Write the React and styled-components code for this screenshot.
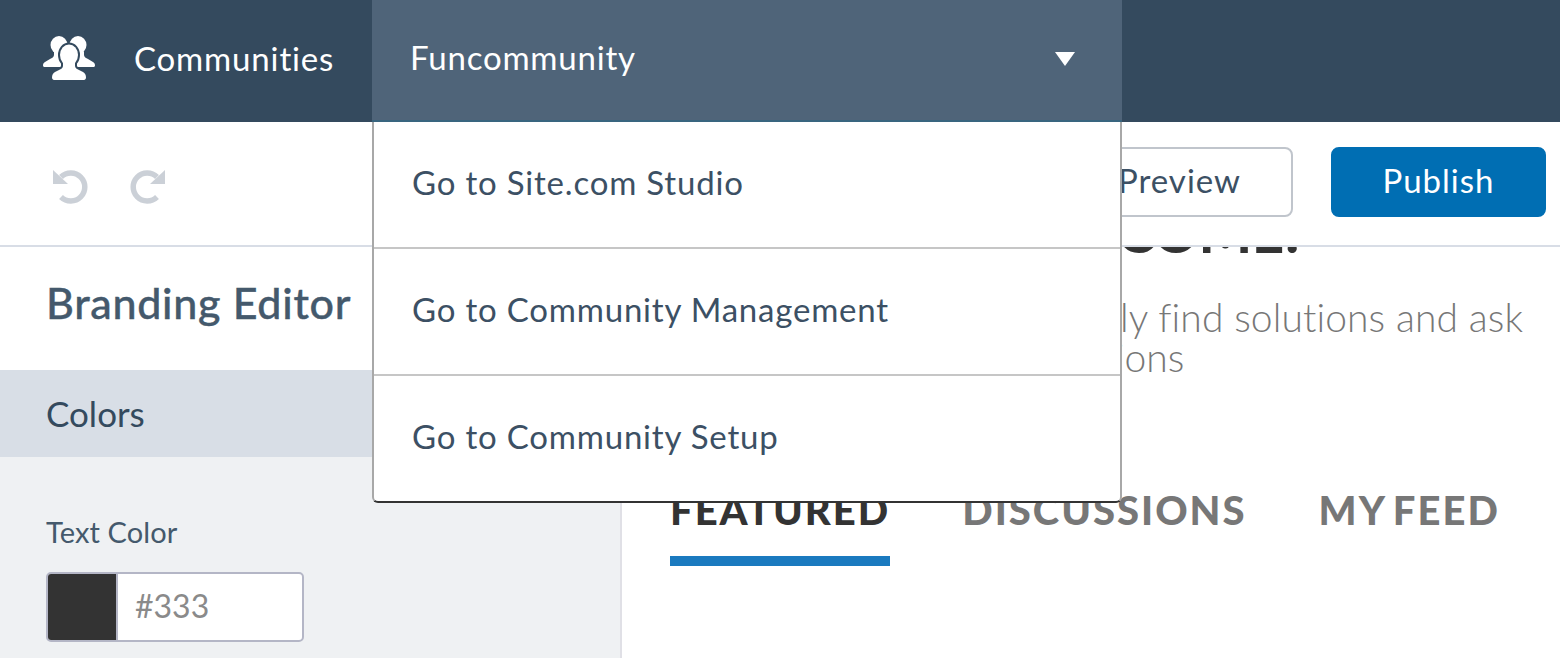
import React from "react";
import styled, { createGlobalStyle } from "styled-components";

const Global = createGlobalStyle`
	html, body {
		margin: 0;
		padding: 0;
		background: #fff;
	}
	* {
		box-sizing: border-box;
	}
`;

const Page = styled.div`
	width: 1560px;
	height: 658px;
	overflow: hidden;
	display: flex;
	flex-direction: column;
	font-family: Lato, "Liberation Sans", sans-serif;
	color: #3c5064;
`;

const TopBar = styled.div`
	height: 122px;
	flex: none;
	display: flex;
	background: #344a5e;
	color: #fff;
`;

const Brand = styled.div`
	width: 372px;
	padding: 0 0 6px 43px;
	display: flex;
	align-items: center;
	gap: 39px;
	font-size: 33px;
	letter-spacing: 0.85px;
`;

const CommunityTab = styled.div`
	position: relative;
	width: 750px;
	padding: 0 47px 6px 38px;
	display: flex;
	align-items: center;
	justify-content: space-between;
	font-size: 33px;
	letter-spacing: 0.8px;
	background: #4f6479;
	border-bottom: 2px solid #39657f;
`;

const Caret = styled.span`
	width: 0;
	height: 0;
	margin-top: 4px;
	border-left: 10px solid transparent;
	border-right: 10px solid transparent;
	border-top: 14px solid #fff;
`;

const Menu = styled.div`
	position: absolute;
	z-index: 5;
	left: 0;
	right: 0;
	top: 122px;
	height: 381px;
	background: #fff;
	border: 2px solid #a8a8a8;
	border-top: 0;
	border-bottom-color: #333;
	border-radius: 0 0 6px 6px;
	display: flex;
	flex-direction: column;
`;

const MenuItem = styled.div`
	height: 127px;
	flex: none;
	padding: 0 0 6px 38px;
	display: flex;
	align-items: center;
	font-size: 33px;
	letter-spacing: 0.8px;
	color: #3c5064;
	border-bottom: 2px solid ${(p) => (p.$last ? "transparent" : "#c6c6c6")};
`;

const Toolbar = styled.div`
	height: 125px;
	flex: none;
	padding: 0 14px 4px 53px;
	display: flex;
	align-items: center;
	justify-content: space-between;
	background: #fff;
	border-bottom: 2px solid #d8dde6;
`;

const History = styled.div`
	display: flex;
	gap: 42px;
	margin-top: 10px;
`;

const Actions = styled.div`
	display: flex;
	gap: 38px;
`;

const Button = styled.div`
	height: 70px;
	width: ${(p) => (p.$primary ? "215px" : "224px")};
	display: flex;
	align-items: center;
	justify-content: ${(p) => (p.$primary ? "center" : "flex-end")};
	padding: 0 ${(p) => (p.$primary ? "0" : "50px")} 3px 0;
	border-radius: 8px;
	font-size: 33px;
	letter-spacing: 1px;
	color: ${(p) => (p.$primary ? "#fff" : "#3c5064")};
	background: ${(p) => (p.$primary ? "#006eb3" : "#fff")};
	border: 2px solid ${(p) => (p.$primary ? "#006eb3" : "#c0c5cc")};
`;

const Body = styled.div`
	flex: 1;
	min-height: 0;
	display: flex;
`;

const Sidebar = styled.div`
	width: 622px;
	flex: none;
	display: flex;
	flex-direction: column;
	background: #eff1f3;
	border-right: 2px solid #e0e0e6;
`;

const EditorTitle = styled.div`
	height: 123px;
	flex: none;
	padding: 0 0 13px 46px;
	display: flex;
	align-items: center;
	background: #fff;
	font-size: 43px;
	font-weight: 500;
	letter-spacing: 0.7px;
	-webkit-text-stroke: 0.4px #44596c;
	color: #44596c;
`;

const SectionHead = styled.div`
	height: 87px;
	flex: none;
	padding: 0 0 2px 46px;
	display: flex;
	align-items: center;
	background: #d8dee6;
	font-size: 35px;
	color: #344a5e;
`;

const Fields = styled.div`
	padding: 58px 0 0 46px;
`;

const FieldLabel = styled.div`
	font-size: 29px;
	line-height: 34px;
	letter-spacing: 0.1px;
	color: #44596c;
	margin-bottom: 23px;
`;

const ColorInput = styled.div`
	width: 258px;
	height: 70px;
	display: flex;
	background: #fff;
	border: 2px solid #b4b6c6;
	border-radius: 5px;
	overflow: hidden;
`;

const Swatch = styled.div`
	width: 70px;
	flex: none;
	background: ${(p) => p.$color};
	border-right: 2px solid #b4b6c6;
`;

const ColorValue = styled.div`
	padding: 0 0 3px 17px;
	display: flex;
	align-items: center;
	font-size: 32px;
	color: #8a8a8a;
`;

const Preview = styled.div`
	flex: 1;
	min-width: 0;
	overflow: hidden;
	padding-left: 48px;
	background: #fff;
`;

const Hero = styled.div`
	margin: -47px 0 0 352px;
	height: 285px;
`;

const HeroTitle = styled.div`
	margin-left: -24px;
	font-size: 56px;
	line-height: 64px;
	font-weight: 900;
	color: #333;
	white-space: nowrap;
`;

const HeroText = styled.div`
	margin-top: 33px;
	width: 520px;
	font-size: 39px;
	line-height: 40px;
	font-weight: 300;
	letter-spacing: 0.1px;
	color: #777;
`;

const Tabs = styled.div`
	display: flex;
	gap: 72px;
`;

const Tab = styled.div`
	height: 81px;
	font-size: 40px;
	line-height: 50px;
	font-weight: 900;
	letter-spacing: 2px;
	word-spacing: -4px;
	white-space: nowrap;
	color: ${(p) => (p.$active ? "#333" : "#777")};
	border-bottom: ${(p) => (p.$active ? "10px solid #1a7abf" : "0")};
`;

const PeopleIcon = () => (
	<svg width="52" height="45" viewBox="0 0 52 45" fill="#fff">
		<ellipse cx="16" cy="9" rx="8.5" ry="9" />
		<ellipse cx="35" cy="9" rx="8.5" ry="9" />
		<path d="M11 16v3c0 2-2 3-4 4l-5 3c-1.500 1-2 2-2 3.500C0 30.500 1 31 2 31h48c1 0 2-.5 2-1.500 0-1.500-.5-2.500-2-3.500l-5-3c-2-1-4-2-4-4v-3z" />
		<g stroke="#344a5e" strokeWidth="4">
			<ellipse cx="26" cy="19" rx="9" ry="10.5" />
			<path d="M20 26v4c0 2-2 3-4 4l-4 2c-2 1-3 3-3 5.500 0 1.500 1 2.500 2 2.500h30c1 0 2-1 2-2.500 0-2.500-1-4.500-3-5.500l-4-2c-2-1-4-2-4-4v-4z" />
		</g>
		<ellipse cx="26" cy="19" rx="9" ry="10.5" />
		<path d="M20 26v4c0 2-2 3-4 4l-4 2c-2 1-3 3-3 5.500 0 1.500 1 2.500 2 2.500h30c1 0 2-1 2-2.500 0-2.500-1-4.500-3-5.500l-4-2c-2-1-4-2-4-4v-4z" />
	</svg>
);

// same drawing for both, redo is undo mirrored
const HistoryIcon = ({ flip }) => (
	<svg width="35" height="34" viewBox="0 0 35 34" style={flip ? { transform: "scaleX(-1)" } : undefined}>
		<path d="M8 7A14 14 0 1 1 8 27" fill="none" stroke="#cbd0d7" strokeWidth="5.5" />
		<path d="M0 0v14h15z" fill="#cbd0d7" />
	</svg>
);

const App = () => {
	return (
		<Page>
			<Global />
			<TopBar>
				<Brand>
					<PeopleIcon />
					Communities
				</Brand>
				<CommunityTab>
					Funcommunity
					<Caret />
					<Menu>
						<MenuItem>Go to Site.com Studio</MenuItem>
						<MenuItem>Go to Community Management</MenuItem>
						<MenuItem $last>Go to Community Setup</MenuItem>
					</Menu>
				</CommunityTab>
			</TopBar>
			<Toolbar>
				<History>
					<HistoryIcon />
					<HistoryIcon flip />
				</History>
				<Actions>
					<Button>Preview</Button>
					<Button $primary>Publish</Button>
				</Actions>
			</Toolbar>
			<Body>
				<Sidebar>
					<EditorTitle>Branding Editor</EditorTitle>
					<SectionHead>Colors</SectionHead>
					<Fields>
						<FieldLabel>Text Color</FieldLabel>
						<ColorInput>
							<Swatch $color="#333" />
							<ColorValue>#333</ColorValue>
						</ColorInput>
					</Fields>
				</Sidebar>
				<Preview>
					<Hero>
						<HeroTitle>WELCOME!</HeroTitle>
						<HeroText>Quickly find solutions and ask questions</HeroText>
					</Hero>
					<Tabs>
						<Tab $active>FEATURED</Tab>
						<Tab>DISCUSSIONS</Tab>
						<Tab>MY FEED</Tab>
					</Tabs>
				</Preview>
			</Body>
		</Page>
	);
};

export default App;
